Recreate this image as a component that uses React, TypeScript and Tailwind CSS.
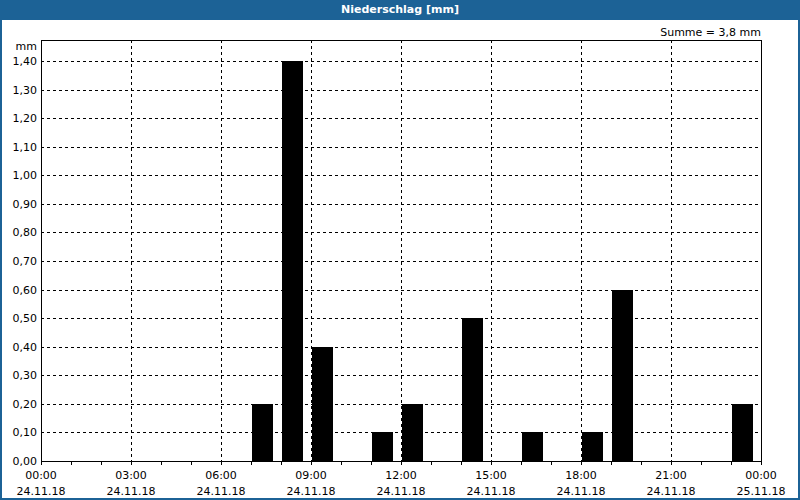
const values: Record<number, number> = { 7: 0.2, 8: 1.4, 9: 0.4, 11: 0.1, 12: 0.2, 14: 0.5, 16: 0.1, 18: 0.1, 19: 0.6, 23: 0.2 }

const X0 = 41
const Y0 = 461
const PX_HOUR = 30
const PX_UNIT = 2000 / 7

const yOf = (v: number) => Math.round(Y0 - v * PX_UNIT)

function Chart() {
  const hLines = Array.from({ length: 14 }, (_, i) => i + 1)
  const vLines = [3, 6, 9, 12, 15, 18, 21]
  const majors = [0, 3, 6, 9, 12, 15, 18, 21, 24]
  return (
    <svg width={796} height={478} className="block" style={{ fontFamily: 'Tahoma, "DejaVu Sans", sans-serif' }}>
      <g transform="translate(-2,-20)" fontSize="11" fill="#000">
        {hLines.map((i) => (
          <line key={i} x1={X0} x2={X0 + 720} y1={yOf(i / 10) + 0.5} y2={yOf(i / 10) + 0.5} stroke="#000" strokeDasharray="3 3" />
        ))}
        {vLines.map((h) => (
          <line key={h} x1={X0 + h * PX_HOUR + 0.5} x2={X0 + h * PX_HOUR + 0.5} y1={40} y2={Y0} stroke="#000" strokeDasharray="3 3" />
        ))}
        {Object.entries(values).map(([h, v]) => (
          <rect key={h} x={X0 + Number(h) * PX_HOUR + 1} y={yOf(v)} width={21} height={Y0 - yOf(v)} fill="#000" />
        ))}
        <rect x={X0 + 0.5} y={40.5} width={720} height={Y0 - 40} fill="none" stroke="#000" />
        {Array.from({ length: 25 }, (_, h) => (
          <line key={h} x1={X0 + h * PX_HOUR + 0.5} x2={X0 + h * PX_HOUR + 0.5} y1={Y0} y2={Y0 + 4} stroke="#000" />
        ))}
        {Array.from({ length: 15 }, (_, i) => (
          <text key={i} x={37} y={yOf(i / 10) + 4} textAnchor="end">
            {(i / 10).toFixed(2).replace('.', ',')}
          </text>
        ))}
        <text x={37} y={50} textAnchor="end">mm</text>
        <text x={761} y={36} textAnchor="end">Summe = 3,8 mm</text>
        {majors.map((h) => (
          <g key={h}>
            <text x={X0 + h * PX_HOUR} y={479} textAnchor="middle">
              {String(h % 24).padStart(2, '0')}:00
            </text>
            <text x={X0 + h * PX_HOUR} y={495} textAnchor="middle">
              {h === 24 ? '25.11.18' : '24.11.18'}
            </text>
          </g>
        ))}
      </g>
    </svg>
  )
}

export default function App() {
  return (
    <div className="w-[800px] h-[500px] bg-white flex flex-col">
      <div className="h-[20px] bg-[#1c6296] text-white text-[11px] font-bold flex items-center justify-center" style={{ fontFamily: 'Tahoma, "DejaVu Sans", sans-serif' }}>
        Niederschlag [mm]
      </div>
      <div className="flex-1 border-x-2 border-b-2 border-[#1c6296] bg-white">
        <Chart />
      </div>
    </div>
  )
}
